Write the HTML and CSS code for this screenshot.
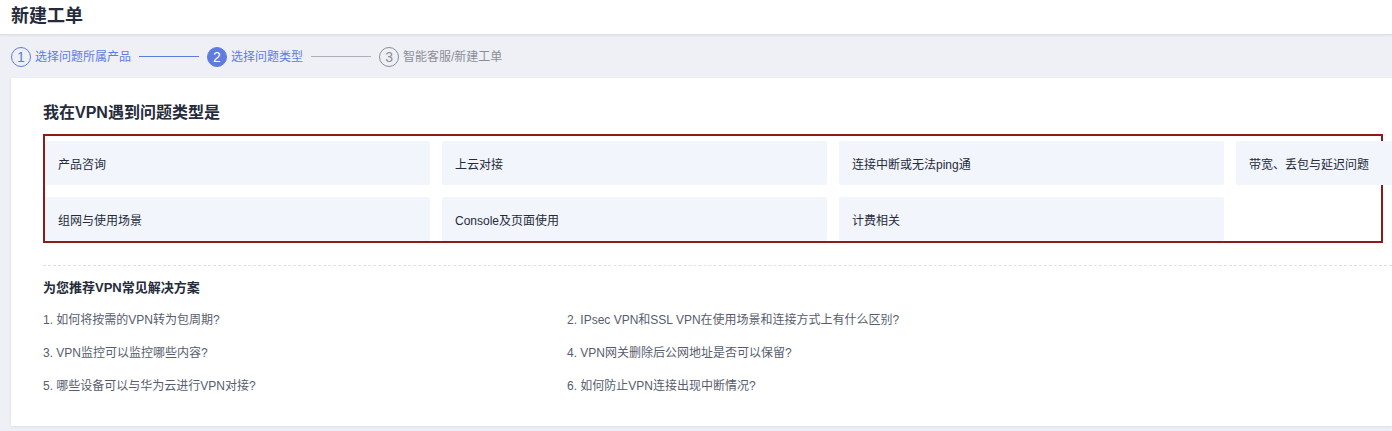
FILE: index.html
```html
<!DOCTYPE html>
<html lang="zh-CN">
<head>
<meta charset="utf-8">
<title>新建工单</title>
<link rel="stylesheet" href="styles.css">
</head>
<body>
<header class="page-header">
  <h1 class="page-title">新建工单</h1>
</header>
<main class="page-body">
  <nav class="steps">
    <div class="step done">
      <span class="step-num">1</span>
      <span class="step-label">选择问题所属产品</span>
    </div>
    <span class="step-line done"></span>
    <div class="step active">
      <span class="step-num">2</span>
      <span class="step-label">选择问题类型</span>
    </div>
    <span class="step-line"></span>
    <div class="step todo">
      <span class="step-num">3</span>
      <span class="step-label">智能客服/新建工单</span>
    </div>
  </nav>
  <section class="card">
    <h2 class="card-title">我在VPN遇到问题类型是</h2>
    <div class="type-box">
      <div class="type-grid">
        <div class="type-item">产品咨询</div>
        <div class="type-item">上云对接</div>
        <div class="type-item">连接中断或无法ping通</div>
        <div class="type-item">带宽、丢包与延迟问题</div>
        <div class="type-item">组网与使用场景</div>
        <div class="type-item">Console及页面使用</div>
        <div class="type-item">计费相关</div>
      </div>
    </div>
    <div class="divider"></div>
    <h3 class="sub-title">为您推荐VPN常见解决方案</h3>
    <ul class="faq">
      <li>1. 如何将按需的VPN转为包周期?</li>
      <li>2. IPsec VPN和SSL VPN在使用场景和连接方式上有什么区别?</li>
      <li>3. VPN监控可以监控哪些内容?</li>
      <li>4. VPN网关删除后公网地址是否可以保留?</li>
      <li>5. 哪些设备可以与华为云进行VPN对接?</li>
      <li>6. 如何防止VPN连接出现中断情况?</li>
    </ul>
  </section>
</main>
</body>
</html>
```
FILE: styles.css
```css
* { box-sizing: border-box; }
html, body {
  margin: 0;
  padding: 0;
  overflow: hidden;
}
body {
  width: 1392px;
  height: 431px;
  background: #eef0f5;
  font-family: "Liberation Sans", "Noto Sans CJK SC", sans-serif;
  color: #252b3a;
}
.page-header {
  height: 35px;
  background: #fff;
  border-bottom: 1px solid #dcdfe6;
  box-shadow: 0 1px 2px rgba(0,0,0,0.05);
  padding-left: 11px;
  display: flex;
  align-items: center;
}
.page-title {
  margin: 0;
  font-size: 18px;
  font-weight: bold;
  color: #252b3a;
  line-height: 24px;
  position: relative;
  top: -1px;
}
.page-body {
  padding: 0 0 0 11px;
}
.steps {
  height: 43px;
  display: flex;
  align-items: center;
}
.step {
  display: flex;
  align-items: center;
  gap: 4px;
}
.step-num {
  width: 20px;
  height: 20px;
  border-radius: 50%;
  border: 1px solid #5e7ce0;
  color: #5e7ce0;
  font-size: 14px;
  display: flex;
  align-items: center;
  justify-content: center;
  line-height: 1;
}
.step-label {
  font-size: 12px;
  line-height: 18px;
  color: #5e7ce0;
}
.step.active .step-num {
  background: #5e7ce0;
  color: #fff;
}
.step.todo .step-num {
  border-color: #8a8e99;
  color: #8a8e99;
}
.step.todo .step-label { color: #8a8e99; }
.step-line {
  width: 60px;
  height: 1px;
  background: #adb0b8;
  margin: 0 8px;
}
.step-line.done { background: #5e7ce0; }
.card {
  height: 348px;
  background: #fff;
  box-shadow: 0 1px 3px rgba(0,0,0,0.08);
  padding: 24px 0 30px 32px;
  overflow: hidden;
}
.card-title {
  margin: 0;
  font-size: 16px;
  font-weight: bold;
  line-height: 22px;
  color: #252b3a;
}
.type-box {
  margin-top: 10px;
  width: 1340px;
  height: 109px;
  border: 2px solid #8e1b1b;
  padding-top: 5px;
}
.type-grid {
  display: grid;
  grid-template-columns: repeat(4, 385px);
  grid-auto-rows: 44px;
  column-gap: 12px;
  row-gap: 12px;
  width: 1576px;
}
.type-item {
  background: #f2f5fc;
  border-radius: 2px;
  font-size: 12px;
  color: #252b3a;
  display: flex;
  align-items: center;
  padding-left: 13px;
}
.divider {
  margin-top: 22px;
  border-top: 1px dashed #dfe1e6;
}
.sub-title {
  margin: 12px 0 0 0;
  font-size: 13px;
  font-weight: bold;
  line-height: 20px;
  color: #252b3a;
}
.faq {
  list-style: none;
  margin: 12px 0 0 0;
  padding: 0;
  display: grid;
  grid-template-columns: 524px 1fr;
  row-gap: 13px;
}
.faq li {
  font-size: 12px;
  line-height: 20px;
  color: #575d6c;
}
```
